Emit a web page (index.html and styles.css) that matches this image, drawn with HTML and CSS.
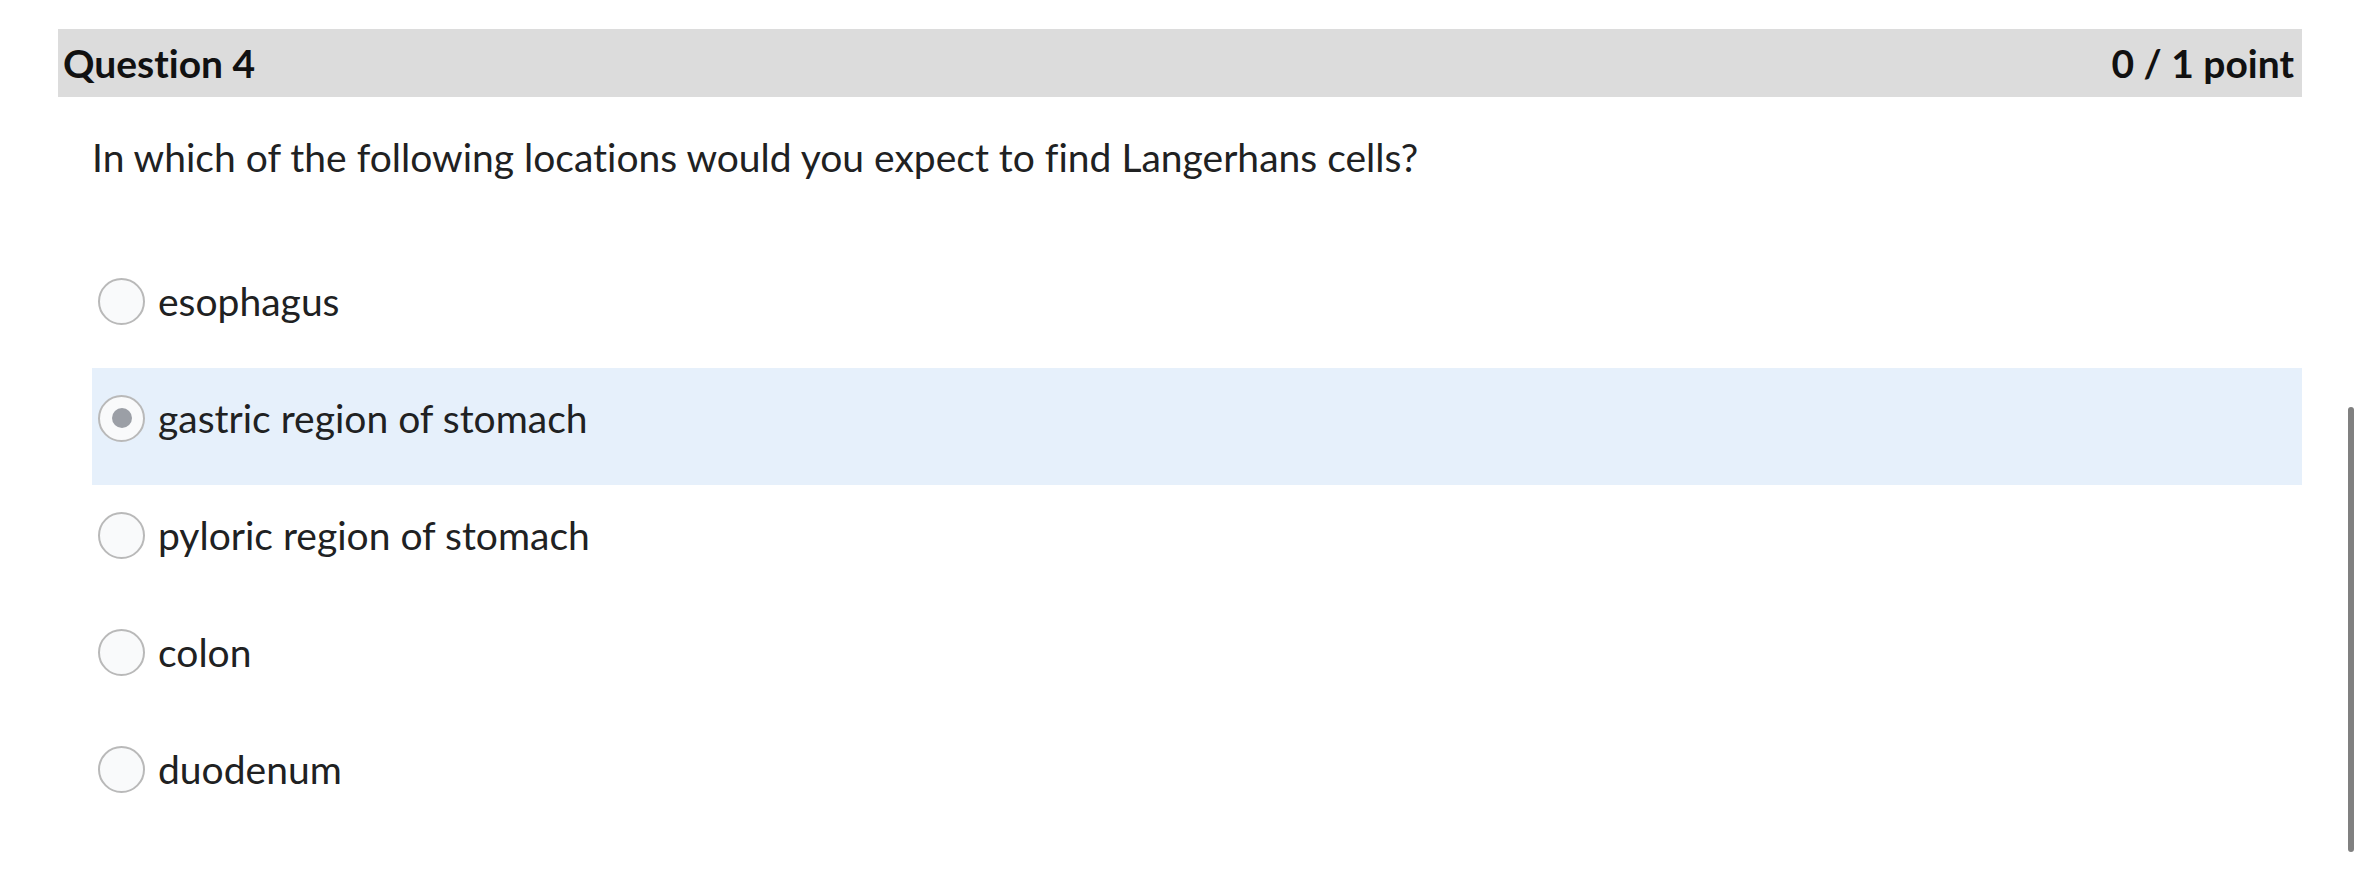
FILE: index.html
```html
<!DOCTYPE html>
<html lang="en">
<head>
<meta charset="utf-8">
<title>Question 4</title>
<link rel="stylesheet" href="styles.css">
</head>
<body>
<div class="quiz">
  <div class="q-header">
    <h2 class="q-title">Question 4</h2>
    <div class="q-points">0 / 1 point</div>
  </div>
  <div class="q-body">
    <p class="q-text">In which of the following locations would you expect to find Langerhans cells?</p>
    <ul class="options">
      <li class="option"><span class="radio"></span><span class="label">esophagus</span></li>
      <li class="option selected"><span class="radio checked"></span><span class="label">gastric region of stomach</span></li>
      <li class="option"><span class="radio"></span><span class="label">pyloric region of stomach</span></li>
      <li class="option"><span class="radio"></span><span class="label">colon</span></li>
      <li class="option"><span class="radio"></span><span class="label">duodenum</span></li>
    </ul>
  </div>
</div>
<div class="scrollbar"></div>
</body>
</html>
```
FILE: styles.css
```css
html, body {
  margin: 0;
  padding: 0;
  background: #ffffff;
}
body {
  font-family: Lato, "Noto Sans", sans-serif;
  color: #202122;
  overflow: hidden;
  height: 869px;
  font-variant-ligatures: none;
}
.quiz {
  margin: 29px 0 0 58px;
  width: 2244px;
}
.q-header {
  display: flex;
  justify-content: space-between;
  align-items: center;
  height: 68px;
  background: #dcdcdc;
  padding: 0 8px 0 5px;
  box-sizing: border-box;
  color: #111111;
}
.q-title, .q-points {
  margin: 0;
  font-size: 39px;
  font-weight: 700;
  line-height: 1;
  padding-top: 1px;
}
.q-body {
  padding-left: 34px;
}
.q-text {
  margin: 37px 0 70px 0;
  font-size: 39px;
  line-height: 1.2;
}
.options {
  list-style: none;
  margin: 0;
  padding: 0;
}
.option {
  display: flex;
  align-items: flex-start;
  height: 117px;
  box-sizing: border-box;
  padding: 27px 0 0 6px;
}
.option.selected {
  background: #e6f0fb;
}
.radio {
  flex: none;
  width: 47px;
  height: 47px;
  box-sizing: border-box;
  border: 2px solid #b9b9b9;
  border-radius: 50%;
  background: #f9fafb;
  display: flex;
  align-items: center;
  justify-content: center;
}
.radio.checked::after {
  content: "";
  width: 20px;
  height: 20px;
  border-radius: 50%;
  background: #9b9fa6;
}
.label {
  margin-left: 13px;
  font-size: 39px;
  line-height: 47px;
}
.scrollbar {
  position: absolute;
  left: 2348px;
  top: 407px;
  width: 6px;
  height: 445px;
  border-radius: 3px;
  background: #808080;
}
```
